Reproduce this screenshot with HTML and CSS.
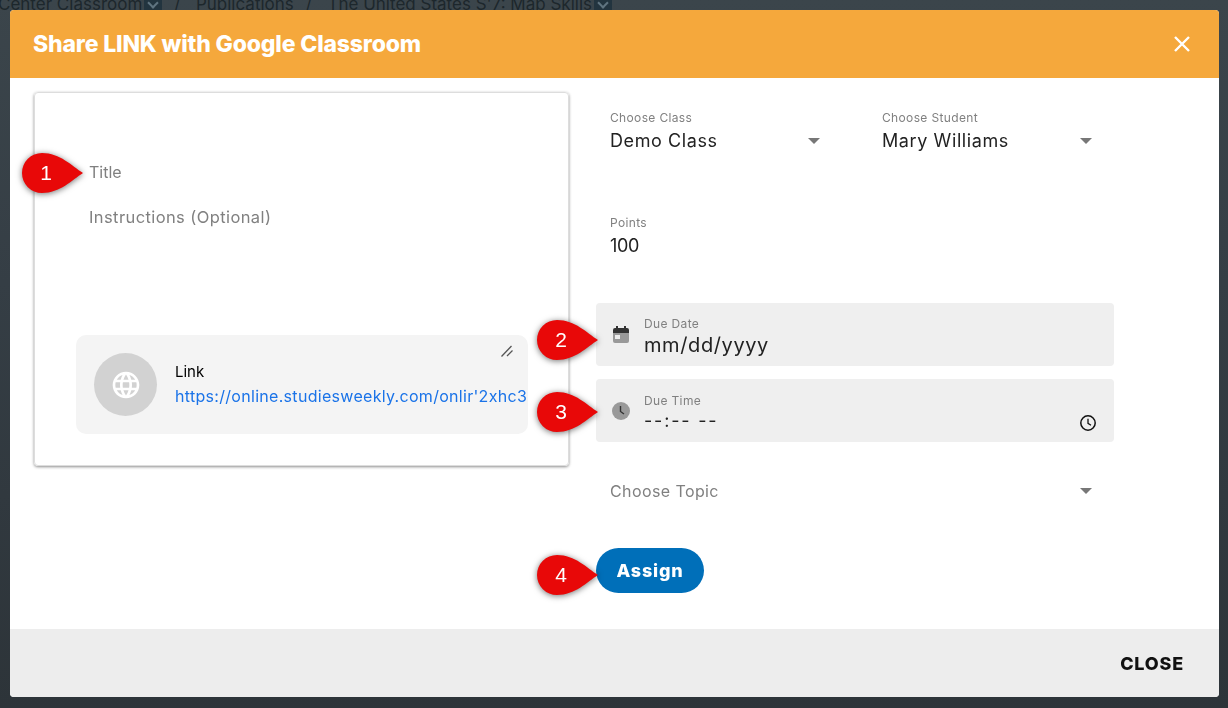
FILE: index.html
```html
<!DOCTYPE html>
<html lang="en">
<head>
  <meta charset="UTF-8" />
  <title>Share LINK with Google Classroom</title>
  <link rel="stylesheet" href="styles.css">
</head>
<body>
  <!-- page behind the dialog -->
  <div class="crumbs">
    <span>Center Classroom</span><i class="crumb-drop"></i>
    <span class="crumb-sep">/</span>
    <span>Publications</span>
    <span class="crumb-sep">/</span>
    <span>The United States S'7: Map Skills</span><i class="crumb-drop"></i>
  </div>

  <div class="modal">
    <div class="modal-head">
      <h2>Share LINK with Google Classroom</h2>
      <svg class="close-x" viewBox="0 0 18 18" width="18" height="18"><path d="M2 2l14 14M16 2L2 16" stroke="#fff" stroke-width="2.4" fill="none"/></svg>
    </div>

    <div class="modal-body">
      <div class="share-card">
        <div class="ph ph-title">Title</div>
        <div class="ph ph-instr">Instructions (Optional)</div>
        <div class="link-card">
          <div class="globe">
            <svg viewBox="0 0 24 24" width="32" height="32"><path fill="#fff" d="M11.99 2C6.47 2 2 6.48 2 12s4.47 10 9.99 10C17.52 22 22 17.52 22 12S17.52 2 11.99 2zm6.93 6h-2.95c-.32-1.25-.78-2.45-1.38-3.56 1.84.63 3.37 1.91 4.33 3.56zM12 4.04c.83 1.2 1.48 2.53 1.91 3.96h-3.82c.43-1.43 1.08-2.76 1.91-3.96zM4.26 14C4.1 13.36 4 12.69 4 12s.1-1.36.26-2h3.38c-.08.66-.14 1.32-.14 2s.06 1.34.14 2H4.26zm.82 2h2.95c.32 1.25.78 2.45 1.38 3.56-1.84-.63-3.37-1.9-4.33-3.56zm2.95-8H5.08c.96-1.66 2.49-2.93 4.33-3.56C8.81 5.55 8.35 6.75 8.03 8zM12 19.96c-.83-1.2-1.48-2.53-1.91-3.96h3.82c-.43 1.43-1.08 2.76-1.91 3.96zM14.34 14H9.66c-.09-.66-.16-1.32-.16-2s.07-1.35.16-2h4.68c.09.65.16 1.32.16 2s-.07 1.34-.16 2zm.25 5.56c.6-1.11 1.06-2.31 1.38-3.56h2.95c-.96 1.65-2.49 2.93-4.33 3.56zM16.36 14c.08-.66.14-1.32.14-2s-.06-1.34-.14-2h3.38c.16.64.26 1.31.26 2s-.1 1.36-.26 2h-3.38z"/></svg>
          </div>
          <div class="link-text">
            <div class="link-name">Link</div>
            <div class="link-url">https://online.studiesweekly.com/onlir'2xhc3</div>
          </div>
          <svg class="link-edit" viewBox="0 0 14 14" width="14" height="14"><path d="M1.5 12.5L11.5 2M7 12l5.5-5.5" stroke="#555" stroke-width="1.3" fill="none"/></svg>
        </div>
      </div>

      <div class="fields">
        <div class="select-row">
          <div class="field select-field">
            <div class="field-label">Choose Class</div>
            <div class="field-value">Demo Class</div>
            <i class="caret"></i>
          </div>
          <div class="field select-field">
            <div class="field-label">Choose Student</div>
            <div class="field-value">Mary Williams</div>
            <i class="caret"></i>
          </div>
        </div>

        <div class="field points">
          <div class="field-label">Points</div>
          <div class="field-value">100</div>
        </div>

        <div class="filled date-box">
          <svg class="filled-icon" viewBox="0 0 20 20" width="20" height="20">
            <path fill="#333" d="M5 1h2v2h6V1h2v2h1a2 2 0 0 1 2 2v3H2V5a2 2 0 0 1 2-2h1z"/>
            <path fill="#999" d="M2 8h16v8a2 2 0 0 1-2 2H4a2 2 0 0 1-2-2z"/>
            <rect fill="#eee" x="4" y="10" width="5" height="4"/>
          </svg>
          <div class="date-main">
            <div class="field-label">Due Date</div>
            <div class="date-value">mm/dd/yyyy</div>
          </div>
        </div>

        <div class="filled time-box">
          <svg class="filled-icon" viewBox="0 0 20 20" width="20" height="20">
            <circle cx="10" cy="10" r="9" fill="#999"/>
            <path d="M9.5 5v5.5l3.5 2.5" stroke="#333" stroke-width="1.4" fill="none"/>
          </svg>
          <div class="time-main">
            <div class="field-label">Due Time</div>
            <div class="time-value">--:-- --</div>
          </div>
          <svg class="time-picker" viewBox="0 0 18 18" width="18" height="18">
            <circle cx="9" cy="9" r="7.2" stroke="#111" stroke-width="1.5" fill="none"/>
            <path d="M9 4.8V9.4l3 1.8" stroke="#111" stroke-width="1.3" fill="none"/>
          </svg>
        </div>

        <div class="topic">
          <span>Choose Topic</span>
          <i class="caret"></i>
        </div>

        <button class="assign">Assign</button>
      </div>
    </div>

    <div class="modal-foot">
      <span class="close-btn">CLOSE</span>
    </div>
  </div>

  <!-- red numbered callouts -->
  <svg class="callout call-1" viewBox="0 0 64 44" width="64" height="44"><path d="M63 22C52 15 40 2 22 2A20 20 0 0 0 22 42C40 42 52 29 63 22Z"/><text x="26" y="29">1</text></svg>
  <svg class="callout call-2" viewBox="0 0 64 44" width="64" height="44"><path d="M63 22C52 15 40 2 22 2A20 20 0 0 0 22 42C40 42 52 29 63 22Z"/><text x="26" y="29">2</text></svg>
  <svg class="callout call-3" viewBox="0 0 64 44" width="64" height="44"><path d="M63 22C52 15 40 2 22 2A20 20 0 0 0 22 42C40 42 52 29 63 22Z"/><text x="26" y="29">3</text></svg>
  <svg class="callout call-4" viewBox="0 0 64 44" width="64" height="44"><path d="M63 22C52 15 40 2 22 2A20 20 0 0 0 22 42C40 42 52 29 63 22Z"/><text x="26" y="29">4</text></svg>
</body>
</html>
```

FILE: styles.css
```css
* {
  box-sizing: border-box;
}
body {
  margin: 0;
  height: 708px;
  overflow: hidden;
  font-family: "Inter", "Open Sans", sans-serif;
  background: linear-gradient(#3b454b, #353e45 40%, #2d3439);
}
.crumbs {
  display: flex;
  align-items: center;
  margin-top: -8px;
  margin-left: -2px;
  height: 24px;
  font-size: 17px;
  color: #1d272c;
  white-space: nowrap;
}
.crumb-drop {
  position: relative;
  width: 18px;
  height: 14px;
  margin-left: 2px;
  background: #22343f;
}
.crumb-drop::after {
  content: "";
  position: absolute;
  left: 5px;
  top: 2px;
  width: 6px;
  height: 6px;
  border-right: 2px solid #5f7480;
  border-bottom: 2px solid #5f7480;
  transform: rotate(45deg);
}
.crumb-sep {
  margin: 0 15.5px 0 12px;
}

.modal {
  position: fixed;
  left: 10px;
  top: 10px;
  width: 1209px;
  height: 687px;
  display: flex;
  flex-direction: column;
  background: #fff;
  border-radius: 4px;
  overflow: hidden;
}
.modal-head {
  flex: none;
  height: 68px;
  display: flex;
  align-items: center;
  justify-content: space-between;
  padding: 0 28px 0 23px;
  background: #f5a83c;
}
.modal-head h2 {
  margin: 0;
  font-size: 23px;
  font-weight: 800;
  letter-spacing: -0.17px;
  color: #fff;
}
.modal-body {
  flex: 1;
  display: flex;
  align-items: flex-start;
}
.modal-foot {
  flex: none;
  height: 68px;
  display: flex;
  align-items: center;
  justify-content: flex-end;
  padding: 0 35px;
  background: #ededed;
}
.close-btn {
  font-size: 18px;
  font-weight: 800;
  letter-spacing: 0.8px;
  color: #111;
}

.share-card {
  width: 535px;
  height: 374px;
  margin: 14px 0 0 24px;
  padding: 67px 41px 0 54px;
  border-radius: 4px;
  border: 1px solid #ddd;
  box-shadow: 0 1px 3px rgba(0, 0, 0, 0.45);
}
.ph {
  font-size: 16px;
  color: #808080;
}
.ph-title {
  height: 24px;
  line-height: 24px;
}
.ph-instr {
  height: 24px;
  line-height: 24px;
  margin-top: 21px;
  font-size: 16.5px;
  letter-spacing: 0.4px;
}
.link-card {
  position: relative;
  width: 452px;
  height: 99px;
  margin: 106px 0 0 -13px;
  padding: 18px 0 0 18px;
  display: flex;
  gap: 18px;
  border-radius: 10px;
  background: #f4f4f4;
}
.globe {
  flex: none;
  width: 63px;
  height: 63px;
  display: flex;
  align-items: center;
  justify-content: center;
  border-radius: 50%;
  background: #d2d2d2;
}
.link-text {
  min-width: 0;
  flex: 1;
  padding-top: 8px;
  overflow: hidden;
}
.link-name {
  font-size: 15px;
  line-height: 22px;
  color: #000;
}
.link-url {
  margin-top: 1px;
  font-size: 16px;
  line-height: 24px;
  letter-spacing: 0.3px;
  white-space: nowrap;
  color: #1a73e8;
}
.link-edit {
  position: absolute;
  top: 9px;
  right: 14px;
}

.fields {
  width: 518px;
  margin-left: 27px;
  padding-top: 31px;
}
.select-row {
  display: flex;
  height: 47px;
  padding-left: 14px;
}
.select-field {
  position: relative;
  flex: none;
  width: 272px;
}
.field-label {
  font-size: 12px;
  line-height: 18px;
  letter-spacing: 0.35px;
  color: #808080;
}
.field-value {
  font-size: 18px;
  line-height: 28px;
  letter-spacing: 0.6px;
  color: #222;
}
.caret {
  display: block;
  width: 0;
  height: 0;
  border-left: 6px solid transparent;
  border-right: 6px solid transparent;
  border-top: 6px solid #777;
}
.select-field .caret {
  position: absolute;
  top: 29px;
  left: 198px;
}
.points {
  margin-top: 58px;
  padding-left: 14px;
  height: 47px;
}
.points .field-value {
  letter-spacing: -0.3px;
}
.filled {
  display: flex;
  align-items: center;
  width: 518px;
  height: 63px;
  padding-left: 15px;
  border-radius: 4px;
  background: #efefef;
}
.filled-icon {
  flex: none;
  margin-right: 13px;
}
.date-box {
  margin-top: 42px;
}
.date-main {
  padding-top: 2px;
}
.date-value {
  font-size: 20px;
  line-height: 24px;
  letter-spacing: 0.6px;
  color: #222;
}
.time-box {
  margin-top: 13px;
}
.time-main {
  flex: 1;
  padding-top: 4px;
}
.time-main .field-label {
  margin-bottom: -1px;
}
.time-value {
  font-size: 18px;
  line-height: 24px;
  letter-spacing: 1.8px;
  color: #222;
}
.time-picker {
  margin: 24px 17px 0 0;
}
.topic {
  display: flex;
  align-items: center;
  justify-content: space-between;
  height: 24px;
  margin-top: 37px;
  padding: 0 22px 0 14px;
  font-size: 16px;
  letter-spacing: 0.4px;
  color: #808080;
}
.assign {
  display: block;
  width: 108px;
  height: 45px;
  margin-top: 45px;
  border: none;
  border-radius: 23px;
  background: #006fb9;
  color: #fff;
  font-family: inherit;
  font-size: 18px;
  font-weight: 800;
  letter-spacing: 0.8px;
  cursor: pointer;
}

.callout {
  position: absolute;
  overflow: visible;
  filter: drop-shadow(0 1px 3px rgba(0, 0, 0, 0.55));
}
.callout path {
  fill: #e80808;
}
.callout text {
  font-family: "Liberation Sans", sans-serif;
  font-size: 21px;
  fill: #fff;
  text-anchor: middle;
}
.call-1 { left: 20px; top: 151px; }
.call-2 { left: 535px; top: 318px; }
.call-3 { left: 535px; top: 390px; }
.call-4 { left: 535px; top: 553px; }
```
